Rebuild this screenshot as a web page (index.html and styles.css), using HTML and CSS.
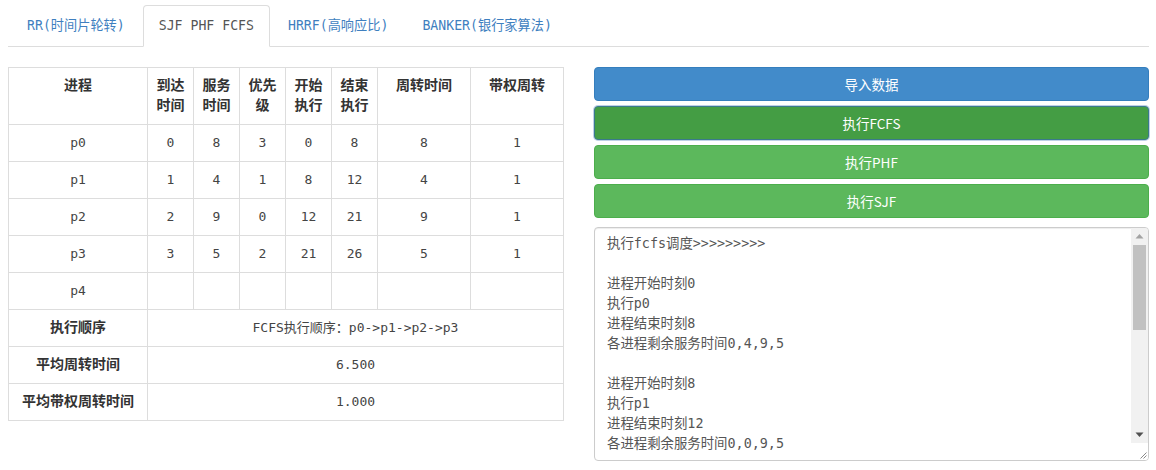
FILE: index.html
```html
<!DOCTYPE html>
<html lang="zh-CN">
<head>
<meta charset="utf-8">
<title>进程调度</title>
<link rel="stylesheet" href="styles.css">
</head>
<body>
<div class="page">
  <ul class="tabs">
    <li class="tab"><a href="#">RR(时间片轮转)</a></li>
    <li class="tab active"><a href="#">SJF PHF FCFS</a></li>
    <li class="tab"><a href="#">HRRF(高响应比)</a></li>
    <li class="tab"><a href="#">BANKER(银行家算法)</a></li>
  </ul>
  <div class="content">
    <div class="left">
      <table class="grid">
        <colgroup>
          <col class="c-name">
          <col class="c-num"><col class="c-num"><col class="c-num"><col class="c-num"><col class="c-num">
          <col class="c-wide"><col class="c-wide">
        </colgroup>
        <thead>
          <tr>
            <th>进程</th><th>到达时间</th><th>服务时间</th><th>优先级</th><th>开始执行</th><th>结束执行</th><th>周转时间</th><th>带权周转</th>
          </tr>
        </thead>
        <tbody>
          <tr><td>p0</td><td>0</td><td>8</td><td>3</td><td>0</td><td>8</td><td>8</td><td>1</td></tr>
          <tr><td>p1</td><td>1</td><td>4</td><td>1</td><td>8</td><td>12</td><td>4</td><td>1</td></tr>
          <tr><td>p2</td><td>2</td><td>9</td><td>0</td><td>12</td><td>21</td><td>9</td><td>1</td></tr>
          <tr><td>p3</td><td>3</td><td>5</td><td>2</td><td>21</td><td>26</td><td>5</td><td>1</td></tr>
          <tr><td>p4</td><td></td><td></td><td></td><td></td><td></td><td></td><td></td></tr>
          <tr><th>执行顺序</th><td colspan="7">FCFS执行顺序：p0-&gt;p1-&gt;p2-&gt;p3</td></tr>
          <tr><th>平均周转时间</th><td colspan="7">6.500</td></tr>
          <tr><th>平均带权周转时间</th><td colspan="7">1.000</td></tr>
        </tbody>
      </table>
    </div>
    <div class="right">
      <button class="btn btn-primary">导入数据</button>
      <button class="btn btn-success btn-focus">执行FCFS</button>
      <button class="btn btn-success">执行PHF</button>
      <button class="btn btn-success">执行SJF</button>
      <div class="log-box">
        <textarea class="log">执行fcfs调度&gt;&gt;&gt;&gt;&gt;&gt;&gt;&gt;&gt;

进程开始时刻0
执行p0
进程结束时刻8
各进程剩余服务时间0,4,9,5

进程开始时刻8
执行p1
进程结束时刻12
各进程剩余服务时间0,0,9,5

进程开始时刻12
执行p2
进程结束时刻21
各进程剩余服务时间0,0,0,5

进程开始时刻21
执行p3
进程结束时刻26
各进程剩余服务时间0,0,0,0

FCFS执行顺序：p0-&gt;p1-&gt;p2-&gt;p3</textarea>
        <div class="sbar">
          <div class="sb-btn"><svg width="17" height="17" viewBox="0 0 17 17"><path d="M4.5 10.5h8l-4-4.5z" fill="#a3a3a3"/></svg></div>
          <div class="sb-track"><div class="sb-thumb"></div></div>
          <div class="sb-btn"><svg width="17" height="17" viewBox="0 0 17 17"><path d="M4.5 6.5h8l-4 4.5z" fill="#505050"/></svg></div>
          <div class="sb-corner"><svg width="17" height="17" viewBox="0 0 17 17"><path d="M15.5 9.5 9.5 15.5M15.5 12.5 12.5 15.5" stroke="#8a8a8a" stroke-width="1" fill="none"/></svg></div>
        </div>
      </div>
    </div>
  </div>
</div>
</body>
</html>
```
FILE: styles.css
```css
* { box-sizing: border-box; }

body {
  margin: 0;
  font-family: "DejaVu Sans Mono", "Noto Sans CJK SC", monospace;
  font-size: 14px;
  line-height: 20px;
  color: #333;
  background: #fff;
}

.page {
  padding: 5px 7px 0 8px;
}

.tabs {
  list-style: none;
  margin: 0;
  padding: 0 0 0 3px;
  display: flex;
  border-bottom: 1px solid #ddd;
}

.tab {
  margin-bottom: -1px;
}

.tab a {
  display: block;
  padding: 10px 15px;
  margin-right: 2px;
  border: 1px solid transparent;
  border-radius: 4px 4px 0 0;
  color: #3f7fbf;
  text-decoration: none;
  font-size: 13.2px;
  line-height: 20px;
}

.tab.active a {
  color: #555;
  background: #fff;
  border-color: #ddd #ddd transparent;
}

.content {
  display: grid;
  grid-template-columns: 555px 555px;
  column-gap: 31px;
  margin-top: 20px;
}

.grid {
  width: 555px;
  border-collapse: collapse;
  table-layout: fixed;
  border: 1px solid #ddd;
}

.c-name { width: 139px; }
.c-num { width: 46px; }
.c-wide { width: 93px; }

.grid th,
.grid td {
  border: 1px solid #ddd;
  padding: 8px;
  line-height: 20px;
  text-align: center;
  vertical-align: top;
}

.grid th {
  font-family: "Noto Sans CJK SC", sans-serif;
  font-weight: bold;
  color: #333;
  padding-top: 6px;
  padding-bottom: 10px;
}

.grid td {
  font-size: 13px;
  color: #444;
}

.right {
  display: flex;
  flex-direction: column;
  gap: 5px;
}

.btn {
  display: block;
  width: 100%;
  height: 34px;
  padding: 6px 12px;
  border: 1px solid transparent;
  border-radius: 4px;
  font-family: "Noto Sans CJK SC", sans-serif;
  font-size: 13.5px;
  line-height: 20px;
  color: #fff;
  text-align: center;
  cursor: pointer;
}

.btn-primary {
  background: #428bca;
  border-color: #357ebd;
}

.btn-success {
  background: #5cb85c;
  border-color: #4cae4c;
}

.btn-focus {
  background: #449d44;
  border-color: #3a7a8c;
  box-shadow: 0 0 0 1px rgba(110, 150, 200, 0.45);
}

.log-box {
  display: flex;
  height: 234px;
  margin-top: 4px;
  border: 1px solid #ccc;
  border-radius: 4px;
  box-shadow: inset 0 1px 1px rgba(0, 0, 0, 0.075);
  overflow: hidden;
  background: #fff;
}

.log {
  flex: 1;
  min-width: 0;
  height: 100%;
  padding: 6px 12px;
  border: 0;
  background: transparent;
  font-family: "DejaVu Sans Mono", "Noto Sans CJK SC", monospace;
  font-size: 13.4px;
  line-height: 20px;
  color: #555;
  overflow: hidden;
  resize: none;
  outline: none;
}

.sbar {
  width: 17px;
  display: flex;
  flex-direction: column;
  flex-shrink: 0;
}

.sb-btn {
  height: 17px;
  background: #f1f1f1;
}

.sb-btn svg,
.sb-corner svg {
  display: block;
}

.sb-track {
  flex: 1;
  background: #f1f1f1;
  padding: 0 2px;
}

.sb-thumb {
  height: 85px;
  background: #c1c1c1;
}

.sb-corner {
  height: 17px;
  background: #fff;
}
```
